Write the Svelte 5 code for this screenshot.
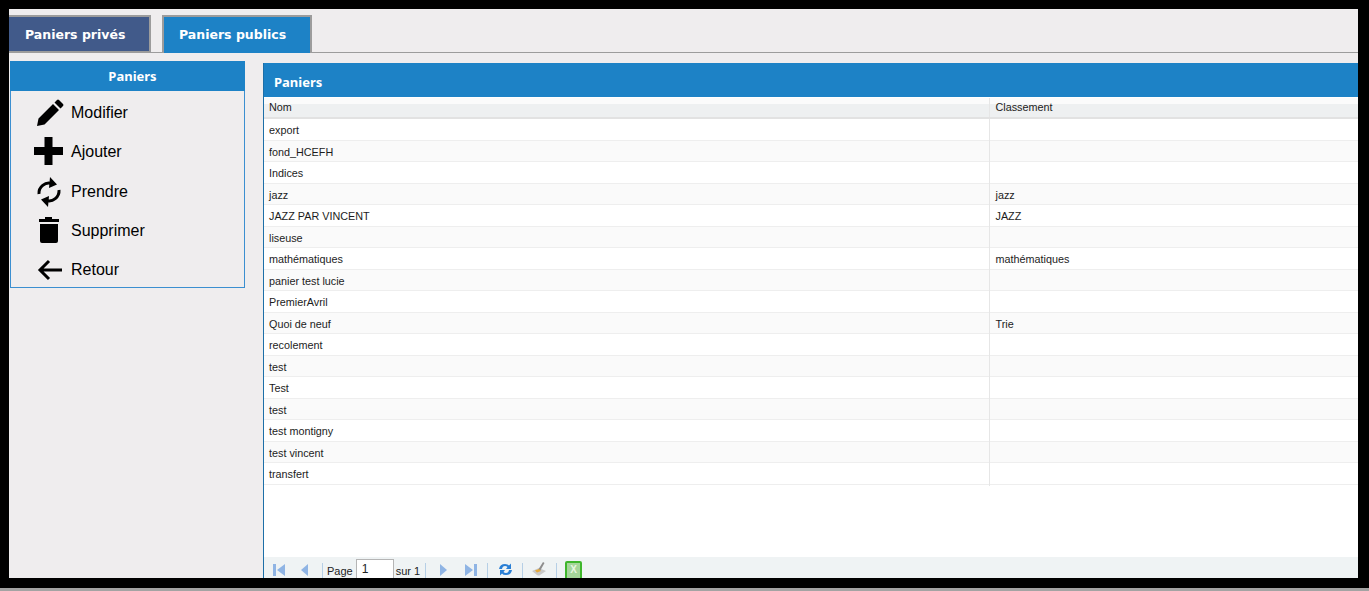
<script lang="ts">
	const tabs = [
		{ label: "Paniers privés", active: false },
		{ label: "Paniers publics", active: true },
	]

	const rows = [
		["export", ""],
		["fond_HCEFH", ""],
		["Indices", ""],
		["jazz", "jazz"],
		["JAZZ PAR VINCENT", "JAZZ"],
		["liseuse", ""],
		["mathématiques", "mathématiques"],
		["panier test lucie", ""],
		["PremierAvril", ""],
		["Quoi de neuf", "Trie"],
		["recolement", ""],
		["test", ""],
		["Test", ""],
		["test", ""],
		["test montigny", ""],
		["test vincent", ""],
		["transfert", ""],
	]
</script>

<div class="frame">
	<div class="screen">
		<div class="tabs">
			{#each tabs as tab}
				<div class="tab" class:active={tab.active}>{tab.label}</div>
			{/each}
		</div>

		<div class="content">
			<aside class="side">
				<h3>Paniers</h3>
				<nav>
					<a href="#modifier">
						<svg viewBox="0 0 30 30"><path d="M3 28 L4.500 20.500 L19 6 L25 12 L10.500 26.500 Z M20.500 4.500 L23 2 Q24 1 25 2 L29 6 Q30 7 29 8 L26.500 10.500 Z" /></svg>
						<span>Modifier</span>
					</a>
					<a href="#ajouter">
						<svg viewBox="0 0 30 30"><path d="M10.500 0 H18.500 V10 H29 V18 H18.500 V28 H10.500 V18 H0 V10 H10.500 Z" /></svg>
						<span>Ajouter</span>
					</a>
					<a href="#prendre">
						<svg viewBox="0 0 30 30" class="line">
							<path d="M5 17 A10 10 0 0 1 18 6.600" />
							<path d="M25 13 A10 10 0 0 1 12 23.400" />
							<path class="solid" d="M16 0 L23 7.500 L15 11 Z M14 30 L7 22.500 L15 19 Z" />
						</svg>
						<span>Prendre</span>
					</a>
					<a href="#supprimer">
						<svg viewBox="0 0 30 30"><path d="M5 3 H11 V1 H18 V3 H25 V6 H5 Z M6 8 H24 V25 Q24 27 22 27 H8 Q6 27 6 25 Z" /></svg>
						<span>Supprimer</span>
					</a>
					<a href="#retour">
						<svg viewBox="0 0 30 30" class="line">
							<path d="M28 15 H6 M15 6 L6 15 L15 24" />
						</svg>
						<span>Retour</span>
					</a>
				</nav>
			</aside>

			<section class="grid">
				<h2>Paniers</h2>
				<div class="head row">
					<div>Nom</div>
					<div>Classement</div>
				</div>
				<div class="body">
					{#each rows as row}
						<div class="row">
							<div>{row[0]}</div>
							<div>{row[1]}</div>
						</div>
					{/each}
				</div>
				<div class="pager">
					<svg class="pg first" viewBox="0 0 12 14"><path d="M0 1 H3 V13 H0 Z M12 1 V13 L4 7 Z" /></svg>
					<svg class="pg prev" viewBox="0 0 7 12"><path d="M7 0 V12 L0 6 Z" /></svg>
					<i class="sep one"></i>
					<span class="lbl">Page</span>
					<input value="1" aria-label="Page" />
					<span class="lbl">sur 1</span>
					<i class="sep two"></i>
					<svg class="pg next" viewBox="0 0 7 12"><path d="M0 0 V12 L7 6 Z" /></svg>
					<svg class="pg last" viewBox="0 0 12 14"><path d="M0 1 V13 L8 7 Z M9 1 H12 V13 H9 Z" /></svg>
					<i class="sep three"></i>
					<svg class="refresh" viewBox="0 0 15 15">
						<path d="M1 7 Q2 2 7 2 Q10 2 11 3.500 L13 1.500 V7 H8 L9.500 5 Q8.500 4 7 4 Q4.500 4 4 7 Z" />
						<path d="M14 8 Q13 13 8 13 Q5 13 4 11.500 L2 13.500 V8 H7 L5.500 10 Q6.500 11 8 11 Q10.500 11 11 8 Z" />
					</svg>
					<i class="sep four"></i>
					<svg class="broom" viewBox="0 0 16 14">
						<path class="dish" d="M1 9 L8 6 L15 9 L9 13 Q8 14 6 13 Z" />
						<path class="stick" d="M7 8 L12 0 L13.500 1 L9 9 Z" />
						<path class="bristle" d="M4 8.500 L8 7 L10 9 L6 10.500 Z" />
					</svg>
					<i class="sep five"></i>
					<div class="excel"><span>X</span></div>
				</div>
			</section>
		</div>
	</div>
</div>

<style>
	:global(body) {
		margin: 0;
		background: #000;
	}

	.frame {
		box-sizing: border-box;
		width: 1369px;
		height: 591px;
		padding: 9px 11px 13px 9px;
		background: #000;
		border-bottom: 3px solid #a3a3a3;
		overflow: hidden;
	}

	.screen {
		height: 569px;
		display: flex;
		flex-direction: column;
		background: #efedee;
		overflow: hidden;
	}

	.tabs {
		display: flex;
		gap: 11px;
		height: 44px;
		box-sizing: border-box;
		padding-top: 6px;
		border-bottom: 1px solid #9c9c9c;
	}

	.tab {
		box-sizing: border-box;
		width: 142px;
		height: 38px;
		padding: 10px 0 0 16px;
		background: #415a8a;
		border: 2px solid #9c9c9c;
		border-left: 0;
		font: bold 12.500px "DejaVu Sans", sans-serif;
		color: #fff;
	}

	.tab.active {
		width: 150px;
		padding-left: 15px;
		background: #1d82c6;
		border-left: 2px solid #9c9c9c;
		border-bottom: 0;
	}

	.content {
		flex: 1;
		display: flex;
		align-items: flex-start;
		gap: 18px;
		padding: 8px 0 0 1px;
		min-height: 0;
	}

	.side {
		box-sizing: border-box;
		width: 235px;
		height: 227px;
		border: 1px solid #3b8fd0;
		border-top: 0;
	}

	.side h3 {
		margin: 0 -1px;
		height: 30px;
		padding-left: 10px;
		text-align: center;
		background: #1d82c6;
		color: #fff;
		font: bold 13px/31px "Noto Sans", sans-serif;
	}

	.side nav {
		display: flex;
		flex-direction: column;
		gap: 9.250px;
		padding-top: 7px;
	}

	.side a {
		display: flex;
		align-items: center;
		height: 30px;
		padding-left: 23px;
		gap: 7px;
		color: #000;
		text-decoration: none;
		font: 16px "Liberation Sans", sans-serif;
	}

	.side a svg {
		width: 30px;
		height: 30px;
		fill: #000;
		flex: none;
	}

	.side a svg.line {
		fill: none;
		stroke: #000;
		stroke-width: 3;
	}

	.side a svg.line .solid {
		fill: #000;
		stroke: none;
	}

	.grid {
		flex: 1;
		height: 515px;
		margin-top: 2px;
		display: flex;
		flex-direction: column;
		border-left: 1px solid #1d6fa8;
		background: #fff;
		min-width: 0;
	}

	.grid h2 {
		margin: 0;
		height: 34px;
		padding-left: 10px;
		background: #1d82c6;
		color: #fff;
		font: bold 13px/38px "Noto Sans", sans-serif;
		flex: none;
	}

	.row {
		display: grid;
		grid-template-columns: 725px 1fr;
		box-sizing: border-box;
		height: 21.500px;
		border-bottom: 1px solid #eeeeee;
		font: 10.800px/23px "Liberation Sans", sans-serif;
		color: #1c1c1c;
	}

	.row > div {
		padding-left: 5px;
	}

	.row > div + div {
		padding-left: 5.500px;
		border-left: 1px solid #e6e6e6;
	}

	.head {
		flex: none;
		margin-top: 1px;
		height: 21px;
		background: linear-gradient(#fbfbfb 0 30%, #eef0f1 30% 100%);
		border-bottom: 2px solid #e2e2e2;
		line-height: 18px;
		color: #222;
	}

	.body {
		flex: 1;
		min-height: 0;
	}

	.body .row:nth-child(even) {
		background: #fafafa;
	}

	.pager {
		flex: none;
		height: 21px;
		display: flex;
		align-items: flex-start;
		background: #eff3f4;
		font: 11px "Liberation Sans", sans-serif;
		color: #222;
		overflow: hidden;
	}

	.pg {
		flex: none;
		fill: #8fb4e4;
		margin-top: 6px;
	}

	.first {
		width: 12px;
		height: 14px;
		margin-left: 9px;
	}

	.prev {
		width: 7px;
		height: 12px;
		margin: 7px 0 0 16px;
	}

	.next {
		width: 7px;
		height: 12px;
		margin: 7px 0 0 14px;
	}

	.last {
		width: 12px;
		height: 14px;
		margin-left: 18px;
	}

	.sep {
		flex: none;
		width: 1px;
		height: 15px;
		margin-top: 6px;
		background: #b6cfe6;
	}

	.sep.one {
		margin-left: 14px;
	}

	.sep.two {
		margin-left: 5px;
	}

	.sep.three {
		margin-left: 10px;
	}

	.sep.four {
		margin-left: 9px;
	}

	.sep.five {
		margin-left: 9px;
	}

	.lbl {
		flex: none;
		margin: 8px 0 0 4px;
		line-height: 13px;
	}

	.lbl + input + .lbl {
		margin-left: 2px;
	}

	input {
		flex: none;
		box-sizing: border-box;
		width: 38px;
		height: 20px;
		margin: 2px 0 0 3px;
		padding: 0 0 0 5px;
		border: 1px solid #b5b5b5;
		background: #fff;
		font: 12px "Liberation Sans", sans-serif;
		color: #222;
		outline: none;
	}

	.refresh {
		flex: none;
		width: 15px;
		height: 15px;
		margin: 5px 0 0 10px;
		fill: #2a7fd5;
	}

	.broom {
		flex: none;
		width: 16px;
		height: 14px;
		margin: 5px 0 0 8px;
	}

	.dish {
		fill: #c9c9c9;
	}

	.stick {
		fill: #8d8d8d;
	}

	.bristle {
		fill: #e5a93a;
	}

	.excel {
		flex: none;
		box-sizing: border-box;
		width: 17px;
		height: 22px;
		margin: 4px 0 0 8px;
		background: #a5d69a;
		border: 2px solid #3fb62c;
		border-radius: 2px;
		font: bold 10px/13px "Liberation Sans", sans-serif;
		color: #e9f7e2;
		text-align: center;
	}
</style>
